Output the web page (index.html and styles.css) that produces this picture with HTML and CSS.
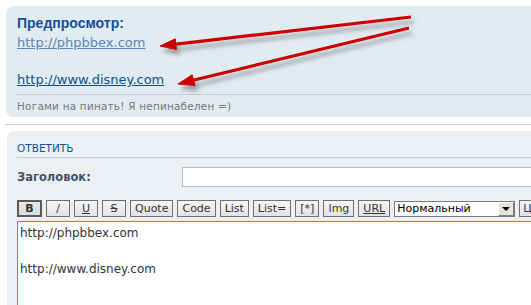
FILE: index.html
```html
<!DOCTYPE html>
<html lang="ru">
<head>
<meta charset="utf-8">
<title>Предпросмотр</title>
<link rel="stylesheet" href="styles.css">
</head>
<body>
<div class="page">
  <div class="preview">
    <h3 class="preview-title">Предпросмотр:</h3>
    <div class="link-line"><a class="link visited" href="#">http://phpbbex.com</a></div>
    <div class="link-line second"><a class="link" href="#">http://www.disney.com</a></div>
    <div class="signature">Ногами на пинать! Я непинабелен =)</div>
  </div>
  <div class="separator"></div>
  <div class="reply">
    <h3 class="reply-title">Ответить</h3>
    <div class="field-row">
      <label class="field-label">Заголовок:</label>
      <div class="input"></div>
    </div>
    <div class="toolbar">
      <span class="btn active b">B</span>
      <span class="btn i">/</span>
      <span class="btn u">U</span>
      <span class="btn s">S</span>
      <span class="btn">Quote</span>
      <span class="btn">Code</span>
      <span class="btn">List</span>
      <span class="btn">List=</span>
      <span class="btn">[*]</span>
      <span class="btn">Img</span>
      <span class="btn u">URL</span>
      <span class="select"><span class="select-text">Нормальный</span><span class="select-arrow"></span></span>
      <span class="btn color">Цвет шрифта</span>
    </div>
    <div class="textarea">http://phpbbex.com<br><br>http://www.disney.com</div>
  </div>
</div>
<svg class="arrows" width="531" height="305" viewBox="0 0 531 305">
  <defs>
    <filter id="sh" x="-10%" y="-50%" width="120%" height="200%">
      <feDropShadow dx="3" dy="5" stdDeviation="2" flood-color="#555" flood-opacity="0.5"/>
    </filter>
  </defs>
  <g filter="url(#sh)" fill="#cc0000" stroke="#cc0000">
    <line x1="411" y1="17" x2="172" y2="44.6" stroke-width="3.2"/>
    <polygon points="160,46 176.5,49.6 175.3,38.8" stroke-width="1"/>
    <line x1="409" y1="28" x2="190" y2="81" stroke-width="3.2"/>
    <polygon points="178,84 194.9,85.6 192.2,74.8" stroke-width="1"/>
  </g>
</svg>
</body>
</html>
```
FILE: styles.css
```css
html, body {
  margin: 0;
  padding: 0;
  background: #ffffff;
  overflow: hidden;
  width: 531px;
  height: 305px;
}
body {
  font-family: "DejaVu Sans", Verdana, sans-serif;
  position: relative;
}
.page {
  padding: 6px 0 0 6px;
}
.preview {
  background: #e1ebf2;
  border-radius: 7px 0 0 7px;
  height: 111px;
  box-sizing: border-box;
  padding: 9px 0 0 11px;
}
.preview-title {
  margin: 0;
  font-family: "Liberation Sans", Arial, sans-serif;
  font-size: 14px;
  line-height: 17px;
  font-weight: bold;
  color: #115098;
}
.link-line {
  margin-top: 2px;
  font-size: 13px;
  line-height: 18px;
}
.link-line.second {
  margin-top: 19px;
}
.link {
  color: #105289;
  text-decoration: underline;
}
.link.visited {
  color: #5b86b3;
}
.signature {
  margin-top: 5px;
  border-top: 1px solid #c6ccd2;
  padding-top: 4px;
  font-size: 10.4px;
  letter-spacing: 0.25px;
  line-height: 14px;
  color: #777777;
}
.separator {
  margin-top: 7px;
  margin-left: -1px;
  border-top: 1px solid #cccccc;
}
.reply {
  margin-top: 6px;
  margin-left: 1px;
  background: #ecf0f3;
  border-radius: 7px 0 0 0;
  padding: 10px 0 0 10px;
  height: 200px;
}
.reply-title {
  margin: 0;
  font-size: 10.5px;
  line-height: 14px;
  font-weight: normal;
  text-transform: uppercase;
  color: #115098;
  padding-bottom: 2px;
  border-bottom: 1px solid #cccccc;
}
.field-row {
  display: flex;
  align-items: center;
  margin-top: 9px;
  height: 20px;
}
.field-label {
  width: 165px;
  flex: none;
  font-size: 11.5px;
  font-weight: bold;
  color: #425067;
}
.input {
  flex: 1;
  height: 20px;
  box-sizing: border-box;
  background: #ffffff;
  border: 1px solid #b4bac0;
  border-right: none;
}
.toolbar {
  display: flex;
  align-items: flex-end;
  gap: 4px;
  margin-top: 13px;
  height: 17px;
  white-space: nowrap;
}
.btn {
  flex: none;
  box-sizing: border-box;
  height: 17px;
  min-width: 24px;
  padding: 0 4px;
  border: 1px solid #6f6f6f;
  background: linear-gradient(#f6f6f6, #e2e2e2);
  font-size: 11px;
  line-height: 15px;
  color: #333333;
  text-align: center;
}
.btn.active {
  border: 2px solid #5a5a5a;
  line-height: 13px;
  background: linear-gradient(#e6e6e6, #dcdcdc);
}
.btn.b { font-weight: bold; width: 25px; }
.btn.i { width: 23px; }
.btn.u { text-decoration: underline; }
.btn.s { text-decoration: line-through; }
.btn.color { color: #3a2c7c; padding-left: 3px; }
.select {
  flex: none;
  box-sizing: border-box;
  width: 121px;
  height: 16px;
  display: flex;
  align-items: center;
  justify-content: space-between;
  background: #ffffff;
  border: 1px solid #7a7a7a;
  padding-left: 2px;
}
.select-text {
  font-size: 11px;
  line-height: 14px;
  color: #000000;
}
.select-arrow {
  width: 16px;
  height: 14px;
  box-sizing: border-box;
  background: #e4e2dc;
  border-top: 1px solid #ffffff;
  border-left: 1px solid #ffffff;
  border-right: 1px solid #808080;
  border-bottom: 1px solid #808080;
  position: relative;
}
.select-arrow::after {
  content: "";
  position: absolute;
  left: 3px;
  top: 4px;
  border-left: 4px solid transparent;
  border-right: 4px solid transparent;
  border-top: 4px solid #000000;
}
.textarea {
  margin-top: 4px;
  background: #ffffff;
  border-top: 1px solid #2a9fe3;
  border-left: 1px solid #2a9fe3;
  padding: 2px 0 0 2px;
  height: 100px;
  font-size: 12px;
  line-height: 18px;
  color: #333333;
}
.arrows {
  position: absolute;
  left: 0;
  top: 0;
  pointer-events: none;
}
```
